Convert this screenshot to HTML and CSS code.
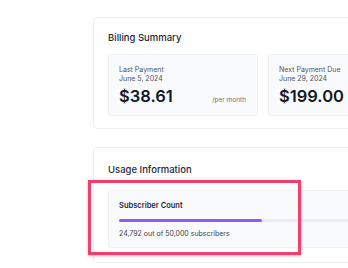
FILE: index.html
```html
<!DOCTYPE html>
<html lang="en">

<head>
  <meta charset="UTF-8">
  <meta name="viewport" content="width=device-width, initial-scale=1.0">
  <title>Billing</title>
  <link rel="stylesheet" href="styles.css">
</head>

<body>
  <div class="page">
    <section class="panel">
      <h2 class="panel-title">Billing Summary</h2>
      <div class="stats">
        <div class="stat">
          <div class="stat-label">Last Payment</div>
          <div class="stat-date">June 5, 2024</div>
          <div class="stat-row">
            <span class="stat-amount">$38.61</span>
            <span class="stat-unit">/per month</span>
          </div>
        </div>
        <div class="stat">
          <div class="stat-label">Next Payment Due</div>
          <div class="stat-date">June 29, 2024</div>
          <div class="stat-row">
            <span class="stat-amount">$199.00</span>
          </div>
        </div>
      </div>
    </section>

    <section class="panel usage-panel">
      <h2 class="panel-title usage-title">Usage Information</h2>
      <div class="usage">
        <div class="highlight"></div>
        <div class="usage-label">Subscriber Count</div>
        <div class="progress">
          <div class="progress-fill" style="width: 49.6%;"></div>
        </div>
        <div class="usage-text">24,792 out of 50,000 subscribers</div>
      </div>
    </section>
  </div>
</body>

</html>
```

FILE: styles.css
```css
body {
  font-family: Inter, "Noto Sans", sans-serif;
  background-color: #ffffff;
  margin: 0;
  padding: 0;
  overflow: hidden;
}

.page {
  width: 340px;
  padding: 17px 0 0 93px;
  display: flex;
  flex-direction: column;
  gap: 18px;
}

.panel {
  border: 1px solid #eceef1;
  border-radius: 4px;
  padding: 14px 14px 12px 14px;
  background-color: white;
}

.usage-panel {
  padding-top: 16px;
  padding-bottom: 14px;
}

.panel-title {
  margin: 0 0 10px 0;
  font-size: 9.5px;
  line-height: 12px;
  font-weight: 500;
  color: #1f2937;
}

.usage-title {
  margin-bottom: 14px;
}

.stats {
  display: grid;
  grid-template-columns: 150px 150px;
  gap: 10px;
}

.stat {
  background-color: #f9fafb;
  border: 1px solid #f0f1f3;
  border-radius: 3px;
  padding: 10px 11px 8px 10px;
  height: 62px;
  box-sizing: border-box;
}

.stat-label,
.stat-date {
  font-size: 7px;
  line-height: 9px;
  color: #52525b;
}

.stat-row {
  display: flex;
  justify-content: space-between;
  align-items: baseline;
  margin-top: 2px;
}

.stat-amount {
  font-size: 16.5px;
  line-height: 22px;
  font-weight: 600;
  color: #111827;
}

.stat-unit {
  font-size: 6.5px;
  color: #71717a;
}

.usage {
  position: relative;
  background-color: #f9fafb;
  border: 1px solid #f0f1f3;
  border-radius: 3px;
  padding: 10px 10px 8px 10px;
}

.usage-label {
  font-size: 7.5px;
  line-height: 10px;
  font-weight: 600;
  color: #1f2937;
}

.progress {
  margin-top: 8px;
  height: 3px;
  border-radius: 2px;
  background-color: #ede9fe;
}

.progress-fill {
  height: 100%;
  border-radius: 2px;
  background-color: #8b5cf6;
}

.usage-text {
  margin-top: 7px;
  font-size: 7px;
  line-height: 10px;
  color: #3f3f46;
}

.highlight {
  position: absolute;
  left: -21px;
  top: -11px;
  width: 213px;
  height: 75px;
  box-sizing: border-box;
  border: 3px solid #f43f6e;
  box-shadow: 0 1px 3px rgba(0, 0, 0, 0.25);
}
```
